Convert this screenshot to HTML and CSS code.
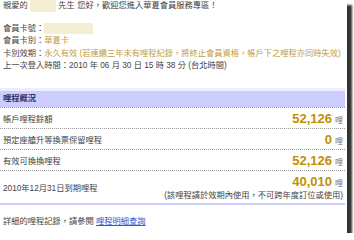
FILE: index.html
```html
<!DOCTYPE html>
<html>
<head>
<meta charset="utf-8">
<link rel="stylesheet" href="styles.css">
</head>
<body>
<div class="shot">
  <div class="greet">親愛的 <span class="blank blank-name"></span> 先生 您好，歡迎您進入華夏會員服務專區！</div>
  <div class="info">
    <div>會員卡號：<span class="blank blank-card"></span></div>
    <div>會員卡別：<span class="gold">華夏卡</span></div>
    <div>卡別效期：<span class="gold">永久有效 (若連續三年未有哩程紀錄，將終止會員資格，帳戶下之哩程亦同時失效)</span></div>
    <div>上一次登入時間：2010 年 06 月 30 日 15 時 38 分 (台北時間)</div>
  </div>
  <div class="miles">
    <div class="head">哩程概況</div>
    <div class="row">
      <span class="label">帳戶哩程餘額</span>
      <span class="val"><b>52,126</b><i>哩</i></span>
    </div>
    <div class="row">
      <span class="label">預定座艙升等換票保留哩程</span>
      <span class="val"><b>0</b><i>哩</i></span>
    </div>
    <div class="row">
      <span class="label">有效可換換哩程</span>
      <span class="val"><b>52,126</b><i>哩</i></span>
    </div>
    <div class="row row-exp">
      <span class="label">2010年12月31日到期哩程</span>
      <span class="val-col">
        <span class="val"><b>40,010</b><i>哩</i></span>
        <span class="note">(該哩程請於效期內使用，不可跨年度訂位或使用)</span>
      </span>
    </div>
  </div>
  <div class="more">詳細的哩程記錄，請參閱 <a href="#">哩程明細查詢</a></div>
</div>
</body>
</html>
```

FILE: styles.css
```css
html, body {
  margin: 0;
  padding: 0;
  background: #ffffff;
}
.shot {
  width: 347px;
  height: 233px;
  background: #ffffff;
  box-shadow: 5px 5px 2px rgba(0, 0, 0, 0.8);
  font-family: "Liberation Sans", "Noto Sans CJK TC", sans-serif;
  font-size: 8.25px;
  color: #444444;
  overflow: hidden;
}
.greet {
  height: 12px;
  line-height: 12px;
  padding-left: 3px;
}
.blank {
  display: inline-block;
  vertical-align: top;
  background: #f4eed2;
}
.blank-name {
  width: 26px;
  height: 12px;
}
.blank-card {
  width: 49px;
  height: 11px;
}
.info {
  margin-top: 11px;
  padding-left: 3px;
  line-height: 12.3px;
}
.gold {
  color: #c4a040;
}
.miles {
  margin-top: 16px;
  border-top: 3px solid #ededfd;
  border-bottom: 2px solid #ccccff;
  width: 345px;
}
.head {
  background: #ccccff;
  height: 16px;
  line-height: 16px;
  padding-left: 3px;
  font-weight: bold;
  color: #333366;
}
.row {
  display: flex;
  justify-content: space-between;
  align-items: center;
  border-top: 1px dotted #9a9a9a;
  height: 20px;
  padding: 0 2px 0 3px;
}
.row-exp {
  height: 32px;
}
.val {
  display: flex;
  align-items: baseline;
  gap: 3px;
}
.val b {
  font-size: 13px;
  color: #bf9000;
}
.val i {
  font-style: normal;
  color: #777;
  font-size: 8px;
}
.val-col {
  display: flex;
  flex-direction: column;
  align-items: flex-end;
  gap: 1px;
}
.note {
  line-height: 11px;
}
.more {
  padding-left: 3px;
  margin-top: 11px;
  line-height: 12px;
}
.more a {
  color: #3355cc;
}
```
